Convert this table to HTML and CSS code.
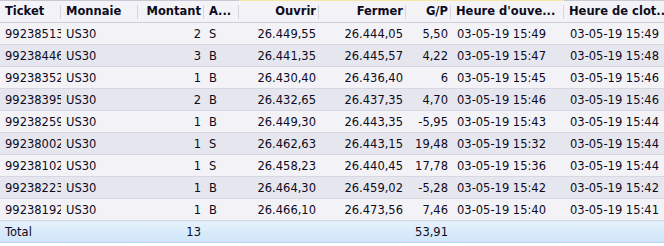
FILE: index.html
```html
<!DOCTYPE html>
<html lang="fr">
<head>
<meta charset="utf-8">
<title>Positions</title>
<link rel="stylesheet" href="styles.css">
</head>
<body>
<div class="grid">
  <table class="trades">
    <colgroup>
      <col class="c-ticket"><col class="c-cur"><col class="c-amt"><col class="c-side"><col class="c-open"><col class="c-close"><col class="c-pl"><col class="c-ot"><col class="c-ct">
    </colgroup>
    <thead>
      <tr>
        <th class="l sep">Ticket</th>
        <th class="l sep">Monnaie</th>
        <th class="r sep">Montant</th>
        <th class="l sep">A...</th>
        <th class="r sep">Ouvrir</th>
        <th class="r sep">Fermer</th>
        <th class="r sep">G/P</th>
        <th class="l sep">Heure d'ouve...</th>
        <th class="l">Heure de clot..</th>
      </tr>
    </thead>
    <tbody>
      <tr class="odd"><td class="l">99238513</td><td class="l">US30</td><td class="r">2</td><td class="l">S</td><td class="r">26.449,55</td><td class="r">26.444,05</td><td class="r">5,50</td><td class="l">03-05-19 15:49</td><td class="l">03-05-19 15:49</td></tr>
      <tr class="even"><td class="l">99238446</td><td class="l">US30</td><td class="r">3</td><td class="l">B</td><td class="r">26.441,35</td><td class="r">26.445,57</td><td class="r">4,22</td><td class="l">03-05-19 15:47</td><td class="l">03-05-19 15:48</td></tr>
      <tr class="odd"><td class="l">99238352</td><td class="l">US30</td><td class="r">1</td><td class="l">B</td><td class="r">26.430,40</td><td class="r">26.436,40</td><td class="r">6</td><td class="l">03-05-19 15:45</td><td class="l">03-05-19 15:46</td></tr>
      <tr class="even"><td class="l">99238395</td><td class="l">US30</td><td class="r">2</td><td class="l">B</td><td class="r">26.432,65</td><td class="r">26.437,35</td><td class="r">4,70</td><td class="l">03-05-19 15:46</td><td class="l">03-05-19 15:46</td></tr>
      <tr class="odd"><td class="l">99238259</td><td class="l">US30</td><td class="r">1</td><td class="l">B</td><td class="r">26.449,30</td><td class="r">26.443,35</td><td class="r">-5,95</td><td class="l">03-05-19 15:43</td><td class="l">03-05-19 15:44</td></tr>
      <tr class="even"><td class="l">99238002</td><td class="l">US30</td><td class="r">1</td><td class="l">S</td><td class="r">26.462,63</td><td class="r">26.443,15</td><td class="r">19,48</td><td class="l">03-05-19 15:32</td><td class="l">03-05-19 15:44</td></tr>
      <tr class="odd"><td class="l">99238102</td><td class="l">US30</td><td class="r">1</td><td class="l">S</td><td class="r">26.458,23</td><td class="r">26.440,45</td><td class="r">17,78</td><td class="l">03-05-19 15:36</td><td class="l">03-05-19 15:44</td></tr>
      <tr class="even"><td class="l">99238223</td><td class="l">US30</td><td class="r">1</td><td class="l">B</td><td class="r">26.464,30</td><td class="r">26.459,02</td><td class="r">-5,28</td><td class="l">03-05-19 15:42</td><td class="l">03-05-19 15:42</td></tr>
      <tr class="odd"><td class="l">99238192</td><td class="l">US30</td><td class="r">1</td><td class="l">B</td><td class="r">26.466,10</td><td class="r">26.473,56</td><td class="r">7,46</td><td class="l">03-05-19 15:40</td><td class="l">03-05-19 15:41</td></tr>
    </tbody>
    <tfoot>
      <tr class="total"><td class="l">Total</td><td></td><td class="r">13</td><td></td><td></td><td></td><td class="r">53,91</td><td></td><td></td></tr>
    </tfoot>
  </table>
</div>
</body>
</html>
```
FILE: styles.css
```css
html, body {
  margin: 0;
  padding: 0;
  background: #ffffff;
}

.grid {
  width: 664px;
  height: 246px;
  overflow: hidden;
  background: #ffffff;
}

.trades {
  width: 664px;
  table-layout: fixed;
  border-collapse: collapse;
  border-spacing: 0;
  font-family: "DejaVu Sans", Verdana, sans-serif;
  font-size: 11.5px;
  color: #0d0a1c;
}

.c-ticket { width: 61px; }
.c-cur { width: 77px; }
.c-amt { width: 66px; }
.c-side { width: 35px; }
.c-open { width: 80px; }
.c-close { width: 87px; }
.c-pl { width: 45px; }
.c-ot { width: 113px; }
.c-ct { width: 100px; }

.trades th,
.trades td {
  padding: 0 3px 0 5px;
  white-space: nowrap;
  overflow: hidden;
  line-height: 14px;
}

.trades td:first-child {
  text-overflow: clip;
  padding-right: 2px;
}

.trades thead th {
  position: relative;
  height: 22px;
  font-weight: bold;
  background: linear-gradient(to bottom, #c8c8d4 0, #c8c8d4 1px, #f4f4f8 1px, #f3f3f7 100%);
  border-bottom: 1px solid #cfcfdb;
  text-overflow: clip;
}

.trades thead th:nth-child(n+5):nth-child(-n+8) {
  background: linear-gradient(to bottom, #f3e7a9 0, #f3e7a9 1px, #f4f4f8 1px, #f3f3f7 100%);
}

.trades thead th.sep::after {
  content: "";
  position: absolute;
  right: 0;
  top: 5px;
  width: 1px;
  height: 14px;
  background: #d6d6e0;
}

.l { text-align: left; }
.r { text-align: right; }

.trades tbody td {
  height: 21px;
  border-bottom: 1px solid #d7d7e1;
}

.trades tbody tr.odd td { background: #f3f3f7; }
.trades tbody tr.even td { background: #e6e6ee; }

.trades tbody td.l:nth-child(n+8) { padding-left: 6px; }

.trades tfoot td {
  height: 21px;
  background: linear-gradient(to bottom, #e6f2fc 0, #d8eafa 50%, #cfe5f8 100%);
  border-bottom: 1px solid #b9d5ee;
}
```
